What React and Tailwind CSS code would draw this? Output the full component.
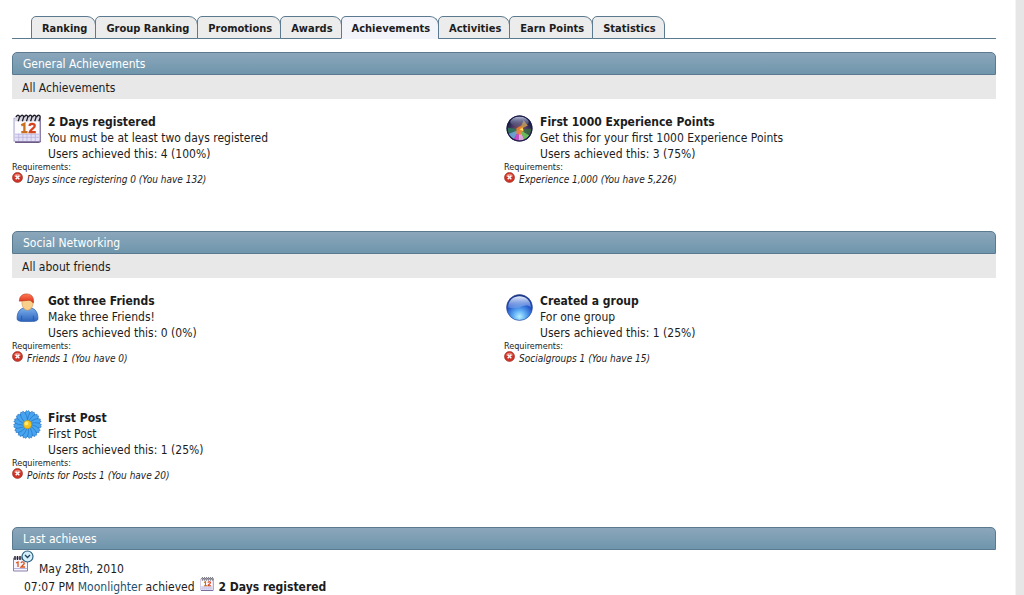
const tabs = ['Ranking', 'Group Ranking', 'Promotions', 'Awards', 'Achievements', 'Activities', 'Earn Points', 'Statistics'];

function CalendarIcon({ className }) {
  return (
    <svg className={className} viewBox="0 0 28 28" aria-hidden="true">
      <path d="M2 4h25v23l-2 1H2z" fill="#6f5a86" />
      <path d="M1 4h25v22H1z" fill="#fbfaff" stroke="#a9a3cf" />
      <path d="M2 19h23v7H2z" fill="#e4e1f6" />
      <path d="M2 19.5h23M2 22.5h23M5.500 19v7M9.500 19v7M13.500 19v7M17.500 19v7M21.500 19v7" stroke="#b9b4de" strokeWidth=".8" />
      <path d="M2 2h24v5H2z" fill="#d9d7e2" />
      <g fill="none" stroke="#20202a" strokeWidth="1.300">
        <path d="M3 3c1-3 4-2 3 1l-1 3M7 3c1-3 4-2 3 1l-1 3M11 3c1-3 4-2 3 1l-1 3M15 3c1-3 4-2 3 1l-1 3M19 3c1-3 4-2 3 1l-1 3M23 3c1-3 4-2 3 1l-1 3" />
      </g>
      <path d="M8 11l3-1.500v8M8 17.500h6" fill="none" stroke="#c9701c" strokeWidth="2.200" />
      <path d="M16 11.500c0-2.500 5-2.500 5 0 0 2-5 4-5 6h6" fill="none" stroke="#d8431f" strokeWidth="2.200" />
    </svg>
  );
}

function PrismIcon({ className }) {
  return (
    <svg className={className} viewBox="0 0 28 28" aria-hidden="true">
      <defs>
        <radialGradient id="prism" cx=".5" cy=".6" r=".55">
          <stop offset="0" stopColor="#a05a48" />
          <stop offset=".55" stopColor="#4a3a66" />
          <stop offset="1" stopColor="#14183c" />
        </radialGradient>
        <linearGradient id="prismShine" x2="0" y2="1">
          <stop offset="0" stopColor="#c9cfe8" stopOpacity=".9" />
          <stop offset="1" stopColor="#5d6690" stopOpacity=".15" />
        </linearGradient>
        <clipPath id="prismClip"><circle cx="14" cy="14" r="11.500" /></clipPath>
      </defs>
      <circle cx="14" cy="14" r="12.500" fill="url(#prism)" />
      <g clipPath="url(#prismClip)" fillOpacity=".85">
        <path d="M14 15L1 13v8z" fill="#2c7c58" />
        <path d="M14 15L2 20l5 7z" fill="#6fb0e0" />
        <path d="M14 15L7 27h6z" fill="#e04bd8" />
        <path d="M14 15l-1 12h7z" fill="#f5b6ea" />
        <path d="M14 15l6 12 6-5z" fill="#6cd05a" />
        <path d="M14 15l12 7V14z" fill="#3c6a42" />
        <path d="M14 15l4-9 4 5z" fill="#e0a43c" />
        <path d="M11 14l4-3 3 4-3 5-4-1z" fill="#f0822c" />
        <path d="M14 15l3-2 1 4z" fill="#ffe36a" />
      </g>
      <ellipse cx="14" cy="7.500" rx="9" ry="5" fill="url(#prismShine)" />
      <circle cx="14" cy="14" r="12" fill="none" stroke="#1c1c4a" />
    </svg>
  );
}

function OrbIcon({ className }) {
  return (
    <svg className={className} viewBox="0 0 28 28" aria-hidden="true">
      <defs>
        <radialGradient id="orb" cx=".5" cy=".85" r=".85">
          <stop offset="0" stopColor="#b5f0ff" />
          <stop offset=".3" stopColor="#5aa8f4" />
          <stop offset=".65" stopColor="#1f4fc4" />
          <stop offset="1" stopColor="#16307e" />
        </radialGradient>
        <linearGradient id="orbShine" x2="0" y2="1">
          <stop offset="0" stopColor="#e6eeff" />
          <stop offset="1" stopColor="#7fa4ea" stopOpacity=".45" />
        </linearGradient>
      </defs>
      <circle cx="14" cy="14" r="12.500" fill="url(#orb)" stroke="#2c4690" strokeWidth=".6" />
      <path d="M3 14C3-.5 25-.5 25 14c-3-3-7-2-11 0-4 1-8 1-11 0z" fill="url(#orbShine)" />
    </svg>
  );
}

function PersonIcon({ className }) {
  return (
    <svg className={className} viewBox="2 0 24 32" aria-hidden="true">
      <defs>
        <linearGradient id="shirt" x2="0" y2="1">
          <stop offset="0" stopColor="#7db2ef" />
          <stop offset="1" stopColor="#2c63bb" />
        </linearGradient>
        <linearGradient id="cap" x2="0" y2="1">
          <stop offset="0" stopColor="#ff7a52" />
          <stop offset="1" stopColor="#d92c18" />
        </linearGradient>
      </defs>
      <path d="M2.500 28c0-8 4-12 11.500-12s11.500 4 11.500 12c0 3-3 3.500-11.500 3.500S2.500 31 2.500 28z" fill="url(#shirt)" stroke="#2b5ba8" strokeWidth=".8" />
      <path d="M7.500 30v-5M20.500 30v-5" stroke="#2b5ba8" />
      <path d="M8 8c-1 6 2 11 6 11s7-5 6-11z" fill="#f9cf8c" stroke="#c98d46" strokeWidth=".6" />
      <path d="M5 9C5 3 9 1 13 1c5 0 8.500 3 7.500 10-1 0-2-3-5-3-4 0-6.500 1-10.500 1z" fill="url(#cap)" stroke="#b42a18" strokeWidth=".6" />
    </svg>
  );
}

function FlowerIcon({ className }) {
  const petals = [0, 24, 48, 72, 96, 120, 144, 168, 192, 216, 240, 264, 288, 312, 336];
  return (
    <svg className={className} viewBox="0 0 28 28" aria-hidden="true">
      <circle cx="14" cy="14" r="12" fill="#2b84d6" />
      {petals.map((angle) => (
        <path
          key={angle}
          d="M14 14C10.500 8 11 2 13 .5l1 1 1-1C17 2 17.500 8 14 14z"
          fill="#47a4ee"
          stroke="#1f68ba"
          strokeWidth=".5"
          transform={`rotate(${angle} 14 14)`}
        />
      ))}
      <circle cx="14" cy="14" r="4" fill="#f4c522" stroke="#a9912a" strokeWidth=".7" />
      <circle cx="13" cy="13" r="1.800" fill="#ffe97a" />
    </svg>
  );
}

function FailedIcon() {
  return (
    <svg className="size-[11px] shrink-0" viewBox="0 0 12 12" aria-hidden="true">
      <circle cx="6" cy="6" r="5.500" fill="#cf3226" stroke="#8f2418" strokeWidth=".6" />
      <path d="M2 4.500a4.300 4.300 0 0 1 8 0c-2 1-6 1-8 0z" fill="#ea8274" />
      <path d="M4 4l4 4M8 4L4 8" stroke="#fff" strokeWidth="1.600" />
    </svg>
  );
}

function DateIcon() {
  return (
    <svg className="h-6 w-[22px] shrink-0" viewBox="0 0 22 24" aria-hidden="true">
      <path d="M1.500 8h14v13h-14z" fill="#f6f4fd" stroke="#8d7fa8" />
      <path d="M2 18.500h13" stroke="#b9b4de" />
      <path d="M3 6v4M5.500 6v4M8 6v4M10.500 6v4" stroke="#22202c" strokeWidth="1.400" />
      <path d="M4 13l2-1v5M9 13c1-2 4-1 3 1l-3 3h4" fill="none" stroke="#d9541f" strokeWidth="1.300" />
      <circle cx="15.500" cy="6.500" r="5.500" fill="#d4eefa" stroke="#2f6285" strokeWidth="1.200" />
      <path d="M13 5l2.500 2.500L18 5" fill="none" stroke="#24405c" strokeWidth="1.300" />
    </svg>
  );
}

const general = [
  { title: '2 Days registered', text: 'You must be at least two days registered', users: '4 (100%)', requirement: 'Days since registering 0 (You have 132)', Icon: CalendarIcon },
  { title: 'First 1000 Experience Points', text: 'Get this for your first 1000 Experience Points', users: '3 (75%)', requirement: 'Experience 1,000 (You have 5,226)', Icon: PrismIcon },
];

const social = [
  { title: 'Got three Friends', text: 'Make three Friends!', users: '0 (0%)', requirement: 'Friends 1 (You have 0)', Icon: PersonIcon },
  { title: 'Created a group', text: 'For one group', users: '1 (25%)', requirement: 'Socialgroups 1 (You have 15)', Icon: OrbIcon },
  { title: 'First Post', text: 'First Post', users: '1 (25%)', requirement: 'Points for Posts 1 (You have 20)', Icon: FlowerIcon },
];

function SectionTitle({ children }) {
  return (
    <h2 className="h-[23px] rounded-t-[5px] border border-[#5b7a8f] bg-linear-to-b from-[#8ba6bb] to-[#6f96ac] px-2.5 text-[12px] leading-[22px] text-white">
      {children}
    </h2>
  );
}

function Achievement({ title, text, users, requirement, Icon }) {
  return (
    <li className="pt-[15px] pb-7">
      <div className="flex gap-1.5">
        <div className="flex w-[30px] shrink-0 justify-end">
          <Icon className="size-[29px]" />
        </div>
        <div className="leading-4">
          <h3 className="font-bold">{title}</h3>
          <p>{text}</p>
          <p>Users achieved this: {users}</p>
        </div>
      </div>
      <p className="text-[9px] leading-[10px]">Requirements:</p>
      <div className="flex gap-1 text-[10px] leading-4">
        <FailedIcon />
        <em>{requirement}</em>
      </div>
    </li>
  );
}

function AchievementSection({ title, description, items }) {
  return (
    <section className="mb-[15px]">
      <SectionTitle>{title}</SectionTitle>
      <p className="h-6 bg-[#e8e8e8] px-2.5 leading-[26px]">{description}</p>
      <ul className="grid grid-cols-2">
        {items.map((item) => (
          <Achievement key={item.title} {...item} />
        ))}
      </ul>
    </section>
  );
}

export default function App() {
  return (
    <div className="flex min-h-screen bg-[#e6e6e6] font-['DejaVu_Sans_Condensed','DejaVu_Sans',sans-serif] text-[12px] text-[#1c1c1c]">
      <main className="mr-2 flex-1 border-r border-[#f4f4f4] bg-white pt-4 pr-[19px] pl-3">
        <nav className="mb-[13px] flex border-b border-[#5b7a8f] pl-5 text-[11px] font-bold" aria-label="Sections">
          {tabs.map((tab) => (
            <a
              key={tab}
              href="#"
              aria-current={tab === 'Achievements' ? 'page' : undefined}
              className="-mb-px -ml-px h-[23px] rounded-tl-[5px] rounded-tr-[9px] border border-[#5b7a8f] bg-[#ececec] pr-2 pl-2.5 leading-[23px] aria-[current=page]:border-b-[#f3f4fa] aria-[current=page]:bg-[#f3f4fa]"
            >
              {tab}
            </a>
          ))}
        </nav>
        <AchievementSection title="General Achievements" description="All Achievements" items={general} />
        <AchievementSection title="Social Networking" description="All about friends" items={social} />
        <section>
          <SectionTitle>Last achieves</SectionTitle>
          <div className="flex gap-[5px]">
            <DateIcon />
            <p className="pt-[11px] leading-4">May 28th, 2010</p>
          </div>
          <p className="flex items-center gap-[5px] pl-3 leading-5">
            <span>
              07:07 PM <a href="#" className="text-[#22506f]">Moonlighter</a> achieved
            </span>
            <CalendarIcon className="mb-1.5 size-[14px]" />
            <strong>2 Days registered</strong>
          </p>
        </section>
      </main>
    </div>
  );
}
